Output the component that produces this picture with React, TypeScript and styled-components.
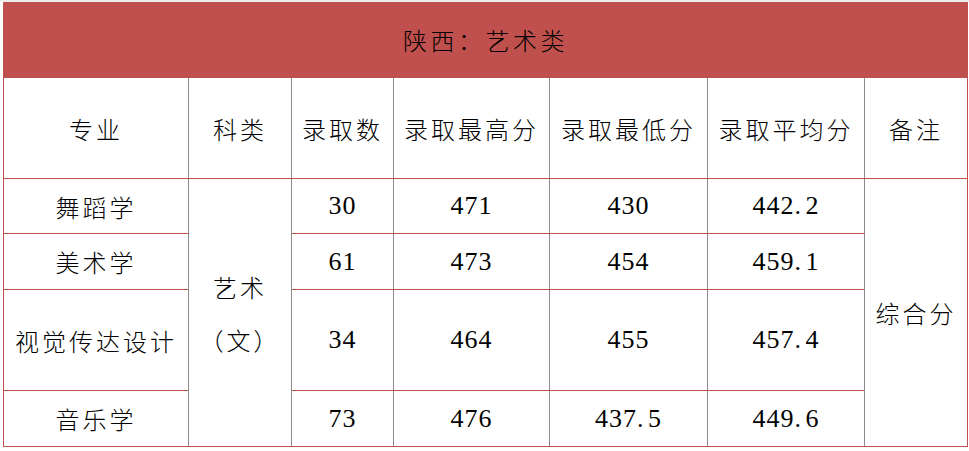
import React from "react";
import styled, { createGlobalStyle } from "styled-components";

const RED = "#c0504d";
const GREY = "#8c8c8c";

const GlobalStyle = createGlobalStyle`
  html, body {
    margin: 0;
    padding: 0;
    background: #fff;
  }
  body {
    font-family: "Noto Sans CJK SC", sans-serif;
    color: #000;
  }
`;

type Row = {
  major: string;
  count: string;
  max: string;
  min: string;
  avg: string;
  height: number;
};

const rows: Row[] = [
  { major: "舞蹈学", count: "30", max: "471", min: "430", avg: "442.2", height: 55 },
  { major: "美术学", count: "61", max: "473", min: "454", avg: "459.1", height: 56 },
  { major: "视觉传达设计", count: "34", max: "464", min: "455", avg: "457.4", height: 101 },
  { major: "音乐学", count: "73", max: "476", min: "437.5", avg: "449.6", height: 56 },
];

const headers = ["专业", "科类", "录取数", "录取最高分", "录取最低分", "录取平均分", "备注"];
const colWidths = [185, 103, 102, 156, 158, 157, 103];

const Score = ({ value }: { value: string }) => {
  const [whole, frac] = value.split(".");
  return (
    <Num>
      {whole}
      {frac !== undefined && (
        <>
          <Dot>.</Dot>
          {frac}
        </>
      )}
    </Num>
  );
};

const App = () => {
  return (
    <Page>
      <GlobalStyle />
      <ScoreTable>
        <colgroup>
          {colWidths.map((w, i) => (
            <col key={i} style={{ width: w }} />
          ))}
        </colgroup>
        <tbody>
          <tr style={{ height: 75 }}>
            <TitleCell colSpan={7}>陕西：艺术类</TitleCell>
          </tr>
          <tr style={{ height: 101 }}>
            {headers.map((h, i) => (
              <TextCell key={h} $first={i === 0} $last={i === headers.length - 1}>
                {h}
              </TextCell>
            ))}
          </tr>
          {rows.map((r, i) => (
            <tr key={r.major} style={{ height: r.height }}>
              <TextCell $first>{r.major}</TextCell>
              {i === 0 && (
                <TextCell rowSpan={rows.length}>
                  <Line>艺术</Line>
                  <Line>（文）</Line>
                </TextCell>
              )}
              <Cell>
                <Score value={r.count} />
              </Cell>
              <Cell>
                <Score value={r.max} />
              </Cell>
              <Cell>
                <Score value={r.min} />
              </Cell>
              <Cell>
                <Score value={r.avg} />
              </Cell>
              {i === 0 && (
                <TextCell rowSpan={rows.length} $last>
                  综合分
                </TextCell>
              )}
            </tr>
          ))}
        </tbody>
      </ScoreTable>
    </Page>
  );
};

export default App;

const Page = styled.div`
  border-top: 2px solid #ececec;
  padding-left: 3px;
  width: 969px;
  box-sizing: border-box;
`;

const ScoreTable = styled.table`
  border-collapse: collapse;
  table-layout: fixed;
  width: 964px;
`;

const TitleCell = styled.td`
  background: ${RED};
  border: 1px solid ${RED};
  text-align: center;
  font-family: "Noto Sans CJK SC", sans-serif;
  font-size: 24px;
  font-weight: 300;
  letter-spacing: 3.5px;
  padding: 0 0 2px;
`;

type CellProps = { $first?: boolean; $last?: boolean };

const Cell = styled.td<CellProps>`
  padding: 0;
  text-align: center;
  vertical-align: middle;
  border-top: 1px solid ${RED};
  border-bottom: 1px solid ${RED};
  border-left: 1px solid ${(p) => (p.$first ? RED : GREY)};
  border-right: 1px solid ${(p) => (p.$last ? RED : GREY)};
`;

const TextCell = styled(Cell)`
  font-family: "Noto Sans CJK SC", sans-serif;
  font-size: 24px;
  letter-spacing: 3px;
  font-weight: 300;
`;

const Num = styled.span`
  font-family: "Liberation Serif", serif;
  font-size: 26px;
  letter-spacing: 1px;
`;

const Dot = styled.span`
  display: inline-block;
  width: 11px;
  text-align: left;
`;

const Line = styled.div`
  line-height: 53px;
`;
